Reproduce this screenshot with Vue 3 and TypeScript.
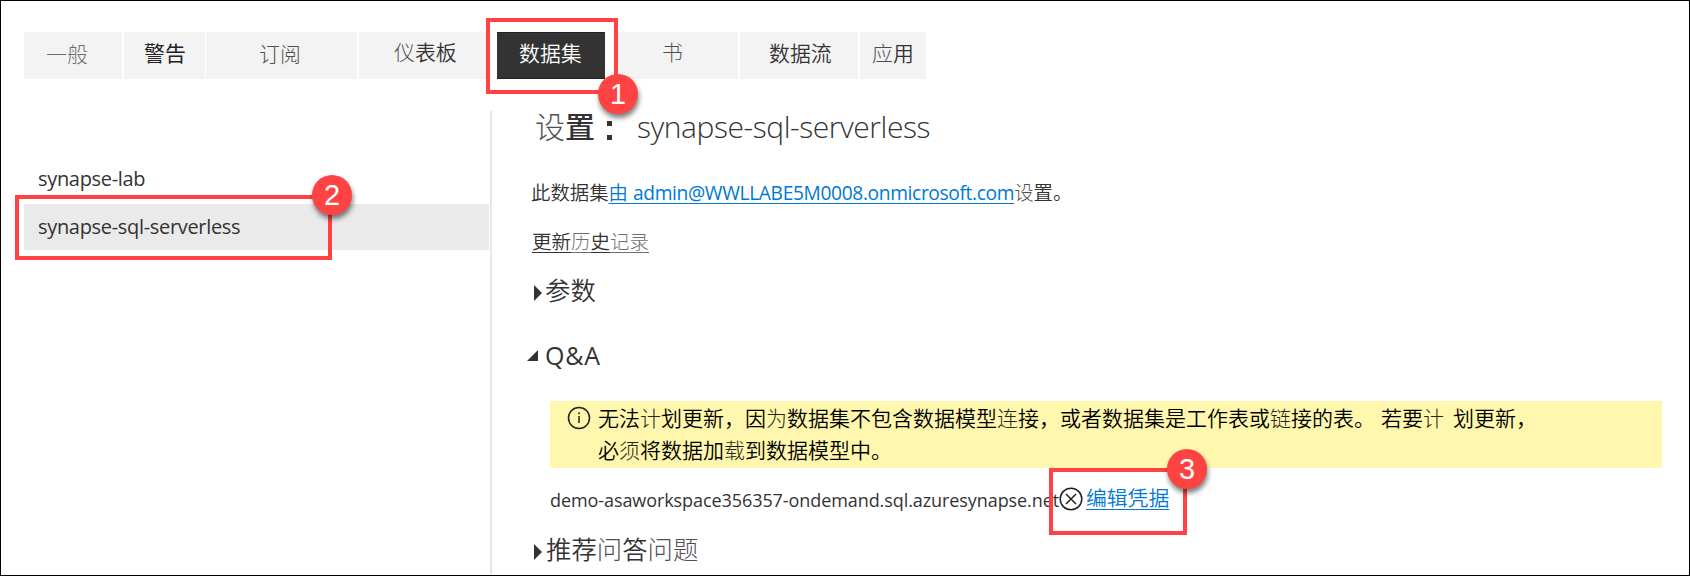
<script setup lang="ts">
interface Tab {
  id: string
  parts: { text: string; tone?: string }[]
}

const tabs: Tab[] = [
  { id: 'general', parts: [{ text: '一般', tone: 'faint' }] },
  { id: 'alerts', parts: [{ text: '警告', tone: 'strong' }] },
  { id: 'subscriptions', parts: [{ text: '订阅', tone: 'thin' }] },
  { id: 'dashboards', parts: [{ text: '仪', tone: 'thin' }, { text: '表板' }] },
  { id: 'datasets', parts: [{ text: '数据集' }] },
  { id: 'workbooks', parts: [{ text: '书', tone: 'thin' }] },
  { id: 'dataflows', parts: [{ text: '数据流' }] },
  { id: 'apps', parts: [{ text: '应', tone: 'thin' }, { text: '用' }] },
]
const datasets = ['synapse-lab', 'synapse-sql-serverless']
const selected = 'synapse-sql-serverless'
</script>

<template>
  <div class="page">
    <nav class="tabs">
      <div v-for="tab in tabs" :key="tab.id" class="tab" :class="tab.id">
        <span class="tab-label"><span v-for="p in tab.parts" :key="p.text" :class="p.tone">{{ p.text }}</span></span>
      </div>
    </nav>

    <div class="body">
      <aside class="sidebar">
        <div v-for="d in datasets" :key="d" class="dataset" :class="{ selected: d === selected }">{{ d }}</div>
      </aside>

      <main class="content">
        <h1 class="title">
          <span class="title-label"><span class="thin">设</span><span class="heavy">置</span></span>
          <b class="colon"><i></i><i></i></b>
          <span class="title-name">synapse-sql-serverless</span>
        </h1>
        <p class="owner">此数据集<a><span>由</span> <span class="mail">admin@WWLLABE5M0008.onmicrosoft.com</span></a><span class="thin">设</span>置。</p>
        <p class="history"><a>更新<span class="pale">历</span>史<span class="pale">记录</span></a></p>
        <h2 class="section params">
          <svg width="8" height="16" viewBox="0 0 8 16"><path d="M0 0L8 8L0 16Z" /></svg>
          <span>参数</span>
        </h2>
        <h2 class="section qa">
          <svg width="11" height="11" viewBox="0 0 11 11"><path d="M11 0V11H0Z" /></svg>
          <span>Q&amp;A</span>
        </h2>
        <div class="notice">
          <svg class="info" width="24" height="24" viewBox="0 0 24 24">
            <circle cx="12" cy="12" r="10.5" />
            <path d="M12 10v7M12 6.3v2" />
          </svg>
          <div class="notice-text">
            <div>无法<span class="thin">计</span>划更新，因<span class="thin">为</span>数据集不包含数据模型<span class="thin">连</span>接，或者数据集是工作表或<span class="thin">链</span>接的表。<span class="gap-s"></span>若要<span class="thin">计</span><span class="gap-m"></span>划更新，</div>
            <div>必<span class="thin">须</span>将数据加<span class="thin">载</span>到数据模型中。</div>
          </div>
        </div>
        <div class="source">
          <span class="host">demo-asaworkspace356357-ondemand.sql.azuresynapse.net</span>
          <svg class="error" width="24" height="24" viewBox="0 0 24 24">
            <circle cx="12" cy="12" r="10.8" />
            <path d="M7 7L17 17M17 7L7 17" />
          </svg>
          <a class="edit">编辑凭据</a>
        </div>
        <h2 class="section featured">
          <svg width="8" height="16" viewBox="0 0 8 16"><path d="M0 0L8 8L0 16Z" /></svg>
          <span>推荐<span class="thin">问</span>答<span class="thin">问题</span></span>
        </h2>
      </main>
    </div>

    <div class="callout one"><span class="badge">1</span></div>
    <div class="callout two"><span class="badge">2</span></div>
    <div class="callout three"><span class="badge">3</span></div>
  </div>
</template>

<style scoped>
.page {
  position: relative;
  box-sizing: border-box;
  width: 1690px;
  height: 576px;
  overflow: hidden;
  border: 1px solid #000;
  background: #fff;
  color: #333;
  font-family: 'Open Sans', 'Noto Sans CJK SC', sans-serif;
  font-weight: 350;
}
h1, h2, p { margin: 0; font-weight: 350; }
.tabs { display: flex; margin: 31px 0 0 23px; height: 47px; font-size: 20.9px; }
.tab { box-sizing: border-box; display: flex; background: #f3f3f3; line-height: 43px; margin-right: 2px; white-space: nowrap; }
.general { width: 98px; padding-left: 22px; line-height: 44px; }
.alerts { width: 81px; padding-left: 20px; margin-right: 1px; }
.subscriptions { width: 151px; padding-left: 53px; line-height: 44px; }
.dashboards { width: 127px; padding-left: 35px; margin-right: 11px; line-height: 41px; }
.datasets { width: 108px; padding-left: 22px; background: #333; color: #fff; border: 1px solid #222; border-width: 1px 0; margin-right: 13px; line-height: 41px; }
.workbooks { width: 120px; padding-left: 44px; line-height: 41px; }
.dataflows { width: 118px; padding-left: 29px; }
.apps { width: 66px; padding-left: 12px; }
.thin, .faint, .pale { font-weight: 300; }
.thin { opacity: .85; }
.faint, .pale { opacity: .7; }
.strong { color: #222; font-weight: 400; }
.body { display: flex; margin-top: 32px; }
.sidebar { box-sizing: border-box; width: 468px; height: 464px; margin-left: 23px; padding-top: 45px; border-right: 2px solid #e6e6e6; }
.dataset { height: 46px; width: 465px; margin-bottom: 2px; padding-left: 14px; box-sizing: border-box; line-height: 45px; font-size: 20px; font-weight: 400; letter-spacing: -.32px; }
.selected { background: #eaeaea; }
.content { flex: 1; display: flex; flex-direction: column; padding-top: 1px; }
.title { display: flex; height: 34px; line-height: 34px; padding-left: 43px; margin-top: -2px; font-size: 30px; }
.title-label { width: 60px; }
.heavy { font-weight: 500; }
.colon { width: 6px; margin: 11px 24px 0 12px; display: flex; flex-direction: column; gap: 9px; }
.colon i { width: 5px; height: 5px; background: #333; }
.title-name { font-weight: 300; font-size: 30px; letter-spacing: -.45px; }
.owner { height: 26px; line-height: 26px; margin-top: 36px; padding-left: 39px; font-size: 19.4px; white-space: nowrap; }
.mail { font-size: 19.2px; font-weight: 400; letter-spacing: -.36px; }
a { color: #0078d4; text-decoration: underline; text-decoration-thickness: 1px; text-underline-offset: 3px; }
.history { height: 26px; line-height: 26px; margin-top: 23px; padding-left: 40px; font-size: 19.5px; }
.history a { color: #333; }
.section { display: flex; align-items: center; height: 34px; line-height: 34px; font-size: 25.4px; }
.section svg { fill: #333; }
.params svg, .featured svg { margin-top: 5px; }
.params { margin-top: 18px; padding-left: 42px; gap: 3px; }
.qa { margin-top: 31px; padding-left: 35px; gap: 7px; font-weight: 400; font-size: 25px; letter-spacing: .8px; }
.notice { display: flex; margin: 29px 0 0 58px; width: 1112px; height: 67px; background: #fff7ad; color: #000; font-size: 21px; line-height: 32px; white-space: nowrap; }
.info { margin: 5px 0 0 17px; }
.info, .error { fill: none; stroke: #222; stroke-width: 1.5; flex: none; }
.notice-text { margin: 1px 0 0 7px; }
.gap-s { display: inline-block; width: 6px; }
.gap-m { display: inline-block; width: 9px; }
.source { display: flex; height: 34px; line-height: 34px; margin: 14px 0 0 58px; font-size: 18px; white-space: nowrap; }
.host { width: 509px; font-weight: 400; letter-spacing: -.08px; padding-top: 1px; }
.error { margin-top: 5px; }
.edit { margin-left: 3px; font-size: 20.8px; line-height: 32px; }
.featured { margin-top: 16px; padding-left: 42px; gap: 4px; }
.callout { position: absolute; box-sizing: border-box; border: 4px solid #ff4343; }
.one { left: 485px; top: 17px; width: 132px; height: 76px; }
.two { left: 14px; top: 194px; width: 317px; height: 65px; }
.three { left: 1048px; top: 467px; width: 138px; height: 67px; }
.badge { position: absolute; right: -24px; width: 40px; height: 40px; border-radius: 50%; background: #ff4343; color: #fff; font: 29px/41px 'Liberation Sans', sans-serif; text-align: center; box-shadow: 1px 4px 5px rgba(0, 0, 0, .5); }
.one .badge { bottom: -24px; }
.two .badge { top: -24px; }
.three .badge { top: -23px; }
</style>
